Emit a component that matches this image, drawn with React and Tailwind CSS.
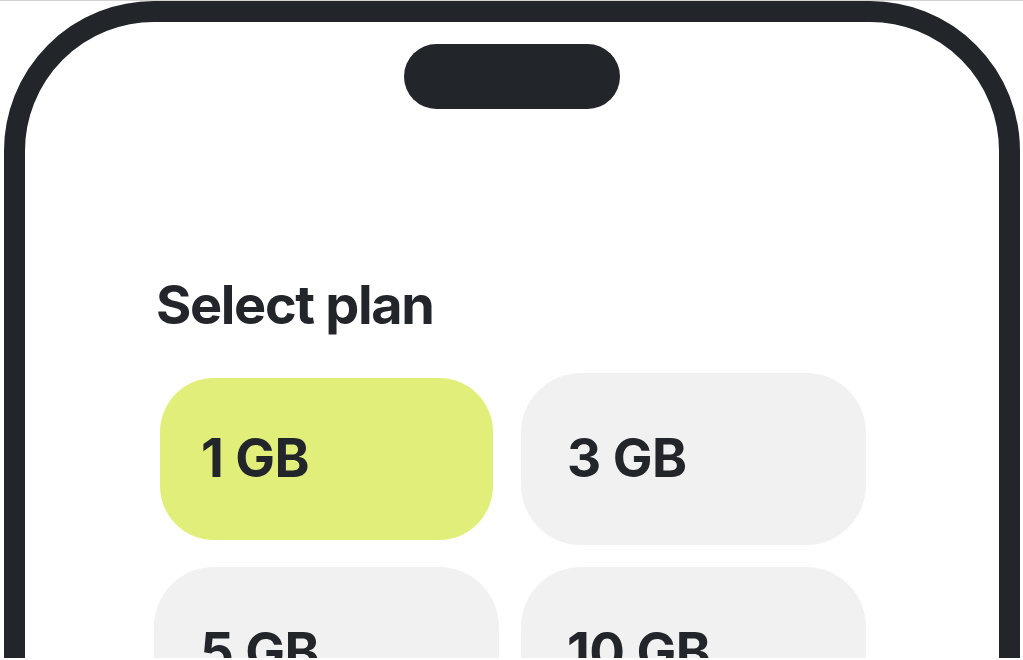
import React, { useState } from "react";

const plans = ["1 GB", "3 GB", "5 GB", "10 GB"];

export default function App() {
  const [selected, setSelected] = useState("1 GB");

  return (
    <div
      className="w-[1023px] h-[660px] bg-white border-t border-[#d4d4d4] overflow-hidden"
      style={{ fontFamily: "Inter, 'Noto Sans', sans-serif" }}
    >
      <div className="h-[657px] overflow-hidden">
        {/* Phone frame */}
        <div className="ml-[4px] w-[1016px] h-[800px] rounded-t-[150px] border-[21px] border-[#22262b] bg-white">
          {/* Dynamic island */}
          <div className="mx-auto mt-[22px] w-[216px] h-[65px] rounded-full bg-[#22262b]" />

          <div className="pl-[129px]">
            <h1 className="mt-[169px] pl-[2px] text-[54px] leading-none font-bold tracking-[-0.025em] text-[#22262b]">
              Select plan
            </h1>

            <div className="mt-[41px] w-[712px] grid grid-cols-2 gap-[22px]">
              {plans.map((p) =>
                p === selected ? (
                  <div key={p} className="h-[172px] px-[6px] py-[5px]">
                    <button
                      type="button"
                      onClick={() => setSelected(p)}
                      className="w-full h-full rounded-[54px] bg-[#e1ef7a] flex items-center pl-[41px]"
                    >
                      <span className="text-[53px] font-bold tracking-[-0.01em] text-[#22262b]">{p}</span>
                    </button>
                  </div>
                ) : (
                  <button
                    key={p}
                    type="button"
                    onClick={() => setSelected(p)}
                    className="h-[172px] rounded-[60px] bg-[#f1f1f1] flex items-center pl-[46px]"
                  >
                    <span className="text-[53px] font-bold tracking-[-0.01em] text-[#22262b]">{p}</span>
                  </button>
                )
              )}
            </div>
          </div>
        </div>
      </div>
    </div>
  );
}
